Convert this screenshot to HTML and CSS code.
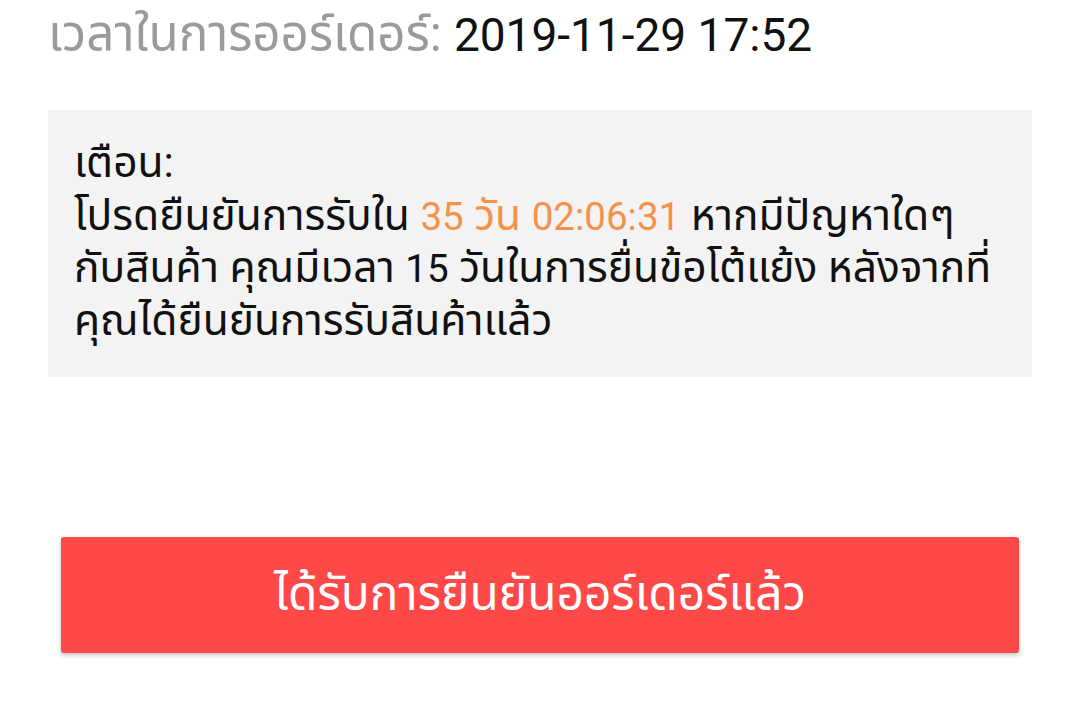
FILE: index.html
```html
<!DOCTYPE html>
<html lang="th">
<head>
<meta charset="utf-8">
<link rel="stylesheet" href="styles.css">
</head>
<body>
<div class="page">
  <div class="order-time"><span class="label">เวลาในการออร์เดอร์:</span> <span class="value">2019-11-29 17:52</span></div>
  <div class="notice">
    <div class="notice-title">เตือน:</div>
    <div class="notice-body">โปรดยืนยันการรับใน <span class="hl"><span class="num">35</span> วัน <span class="num">02:06:31</span></span> หากมีปัญหาใดๆ<br>กับสินค้า คุณมีเวลา <span class="num">15</span> วันในการยื่นข้อโต้แย้ง หลังจากที่<br>คุณได้ยืนยันการรับสินค้าแล้ว</div>
  </div>
  <div class="actions">
    <button class="confirm">ได้รับการยืนยันออร์เดอร์แล้ว</button>
  </div>
</div>
</body>
</html>
```

FILE: styles.css
```css
html, body {
  margin: 0;
  padding: 0;
  background: #ffffff;
}
body {
  font-family: Roboto, "Noto Sans", "Noto Sans Thai", sans-serif;
  color: #111;
}
.page {
  width: 1080px;
  height: 724px;
  overflow: hidden;
  padding: 0 48px;
  box-sizing: border-box;
}
.order-time {
  font-size: 49.3px;
  line-height: 52px;
  padding-top: 8px;
  height: 110px;
  box-sizing: border-box;
  white-space: nowrap;
}
.order-time .label { color: #9a9a9a; }
.order-time .value { color: #111; font-size: 46px; line-height: 1; }
.notice {
  background: #f3f3f3;
  padding: 27px 26px 28px;
  height: 267px;
  box-sizing: border-box;
  font-size: 42.5px;
  line-height: 52.5px;
}
.notice .num {
  font-size: 38.5px;
  line-height: 1;
}
.notice .hl { color: #f5914a; }
.actions {
  padding: 160px 13px 0;
}
.confirm {
  display: block;
  width: 100%;
  height: 116px;
  border: none;
  border-radius: 3px;
  background: #ff4848;
  color: #fff;
  font-family: inherit;
  font-size: 47.8px;
  box-shadow: 0 2px 5px rgba(0,0,0,0.25);
  padding: 0;
}
```
